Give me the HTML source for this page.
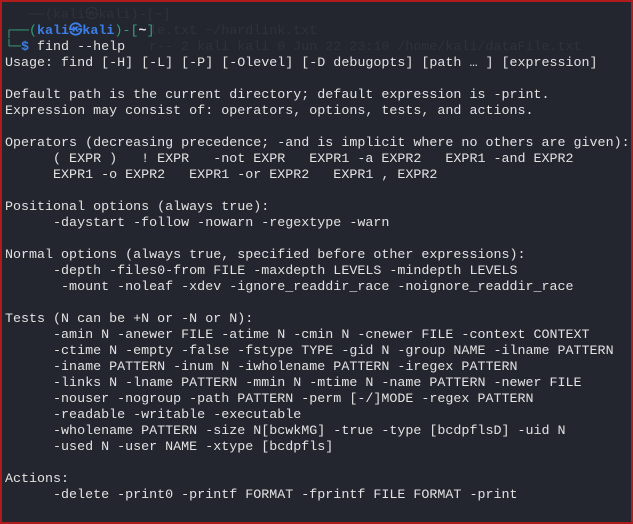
<!DOCTYPE html>
<html><head><meta charset="utf-8"><style>
html,body{margin:0;padding:0;}
body{width:633px;height:524px;background:#b01c1c;overflow:hidden;position:relative;}
.term{position:absolute;left:2px;top:2px;width:629px;height:520px;background:#24262f;overflow:hidden;}
pre{position:absolute;left:3px;top:22px;margin:0;font-family:"Liberation Mono",monospace;font-size:13.35px;line-height:16px;color:#e2e2e2;white-space:pre;}
.ghost{color:#2f323b;top:6px;}
.g{color:#35a07c;}
.b{color:#3b7fe8;font-weight:bold;}
.w{color:#e8e8e8;font-weight:bold;}
</style></head><body><div class="term">
<pre class="ghost">   ──(kali㉿kali)-[~]
                  le.txt ~/hardlink.txt
                  r-- 2 kali kali 0 Jun 22 23:10 /home/kali/dataFile.txt</pre>
<pre><span class="g">┌──(</span><span class="b">kali㉿kali</span><span class="g">)-[</span><span class="w">~</span><span class="g">]</span>
<span class="g">└─</span><span class="b">$</span> find --help
Usage: find [-H] [-L] [-P] [-Olevel] [-D debugopts] [path … ] [expression]

Default path is the current directory; default expression is -print.
Expression may consist of: operators, options, tests, and actions.

Operators (decreasing precedence; -and is implicit where no others are given):
      ( EXPR )   ! EXPR   -not EXPR   EXPR1 -a EXPR2   EXPR1 -and EXPR2
      EXPR1 -o EXPR2   EXPR1 -or EXPR2   EXPR1 , EXPR2

Positional options (always true):
      -daystart -follow -nowarn -regextype -warn

Normal options (always true, specified before other expressions):
      -depth -files0-from FILE -maxdepth LEVELS -mindepth LEVELS
       -mount -noleaf -xdev -ignore_readdir_race -noignore_readdir_race

Tests (N can be +N or -N or N):
      -amin N -anewer FILE -atime N -cmin N -cnewer FILE -context CONTEXT
      -ctime N -empty -false -fstype TYPE -gid N -group NAME -ilname PATTERN
      -iname PATTERN -inum N -iwholename PATTERN -iregex PATTERN
      -links N -lname PATTERN -mmin N -mtime N -name PATTERN -newer FILE
      -nouser -nogroup -path PATTERN -perm [-/]MODE -regex PATTERN
      -readable -writable -executable
      -wholename PATTERN -size N[bcwkMG] -true -type [bcdpflsD] -uid N
      -used N -user NAME -xtype [bcdpfls]

Actions:
      -delete -print0 -printf FORMAT -fprintf FILE FORMAT -print</pre>
</div></body></html>
